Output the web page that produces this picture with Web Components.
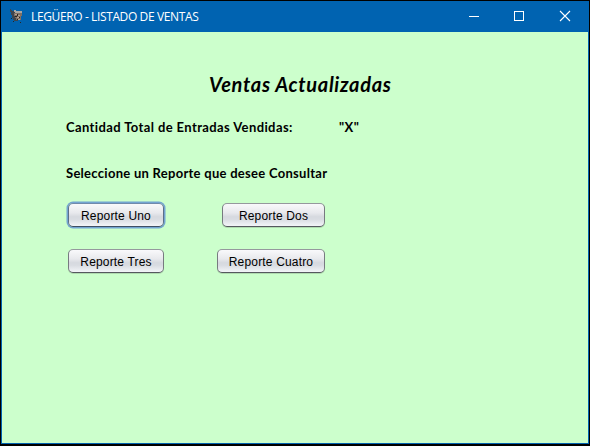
<!DOCTYPE html>
<html lang="es">
<head>
<meta charset="utf-8">
<title>LEGÜERO - LISTADO DE VENTAS</title>
<style>
html, body { margin: 0; height: 100%; background: #000; overflow: hidden; }
</style>
</head>
<body>
<app-window>
  <title-bar slot="bar">LEGÜERO - LISTADO DE VENTAS</title-bar>
  <sales-report></sales-report>
</app-window>
<script>
function define(name, html) {
  const tpl = document.createElement('template');
  tpl.innerHTML = html;
  customElements.define(name, class extends HTMLElement {
    constructor() {
      super();
      this.attachShadow({ mode: 'open' }).appendChild(tpl.content.cloneNode(true));
    }
  });
}

define('title-bar', `
<style>
:host { display: flex; align-items: center; height: 31px; box-sizing: border-box; padding-left: 9px; background: #0063b1; color: #fff; font: 12px/31px "Open Sans", sans-serif; }
.icon { width: 14px; height: 16px; margin-right: 7px; margin-top: -2px; flex: none; }
.name { flex: 1; white-space: nowrap; letter-spacing: -0.38px; }
.controls { display: flex; margin-right: 2px; }
.controls svg { display: block; width: 45px; height: 31px; }
</style>
<svg class="icon" viewBox="0 0 14 16" shape-rendering="crispEdges">
  <path fill="#3d454e" d="M0 1h1v1h1v1h2v1h8v1h-1v4h-1v3h-2v1h-4v-1h-1v-2h-1v-3h-1v-3h-1v-2h-1z"/>
  <path fill="#aaa7a2" d="M4 2h2v1h6v2h-7v-1h-1z"/>
  <path fill="#806f63" d="M4 5h8v3h-1v4h-5v-2h-1v-2h-1z"/>
  <path fill="#b0a294" d="M5 6h2v1h-2zM8 7h2v1h-2zM7 9h2v1h-2zM8 11h2v1h-2z"/>
  <path fill="#292623" d="M7 6h1v2h-1zM5 8h2v1h-2zM9 9h1v1h-1zM7 11h1v1h-1zM1 10h1v1h-1zM3 13h1v1h-1zM10 14h1v1h-1z"/>
</svg>
<span class="name"><slot></slot></span>
<div class="controls">
  <svg viewBox="0 0 45 31"><path d="M17 15.5h10" stroke="#fff"/></svg>
  <svg viewBox="0 0 45 31"><rect x="17.5" y="10.5" width="9" height="9" fill="none" stroke="#fff"/></svg>
  <svg viewBox="0 0 45 31"><path d="M18 10l10 10M28 10l-10 10" stroke="#fff" stroke-width="1.1"/></svg>
</div>`);

define('java-button', `
<style>
:host { display: block; height: 24px; }
button { display: block; width: 100%; height: 24px; box-sizing: border-box; margin: 0; padding: 1px 0 0; outline: 0; border: 1px solid; border-color: #95989d #777a80 #55585e #777a80; border-radius: 5px;
  background: linear-gradient(#f9f9fb 0%, #e8e9ed 40%, #d6d9df 58%, #d9dce2 70%, #f3f5f8 100%);
  box-shadow: 0 1px 0 rgba(90,110,90,.25); color: #000; font: 12px/22px "Liberation Sans", sans-serif; letter-spacing: .17px; white-space: nowrap; }
:host([focused]) button { border-color: #718aab #5c6f89 #3f4f65; box-shadow: 0 0 0 1.5px #73a4d1; }
</style>
<button><slot></slot></button>`);

define('sales-report', `
<style>
:host { display: block; box-sizing: border-box; height: 411px; padding: 38px 0 0 64px; background: #cfc; color: #000; font: 700 13px/20px Lato, sans-serif; font-variant-ligatures: none; }
h1 { margin: 0 0 0 143px; font: italic 700 20px/28px Lato, sans-serif; font-variant-ligatures: none; white-space: nowrap; letter-spacing: .68px; }
.row { display: flex; margin-top: 19px; white-space: nowrap; letter-spacing: .39px; }
.total { width: 273px; }
.prompt { margin-top: 26px; letter-spacing: .28px; }
.grid { display: grid; grid-template-columns: 98px 108px; column-gap: 53px; row-gap: 22px; justify-items: end; margin-top: 20px; }
.grid java-button { width: 100%; }
.grid .a { width: 96px; }
.grid .dos { width: 103px; }
</style>
<h1>Ventas Actualizadas</h1>
<div class="row"><span class="total">Cantidad Total de Entradas Vendidas:</span><span>"X"</span></div>
<div class="row prompt"><span>Seleccione un Reporte que desee Consultar</span></div>
<div class="grid">
  <java-button class="a" focused>Reporte Uno</java-button>
  <java-button class="dos">Reporte Dos</java-button>
  <java-button class="a">Reporte Tres</java-button>
  <java-button>Reporte Cuatro</java-button>
</div>`);

define('app-window', `
<style>
:host { display: block; box-sizing: border-box; width: 588px; height: 443px; margin: 1px; background: #0063b1; }
.content { margin: 0 1px; }
</style>
<slot name="bar"></slot>
<div class="content"><slot></slot></div>`);
</script>
</body>
</html>
